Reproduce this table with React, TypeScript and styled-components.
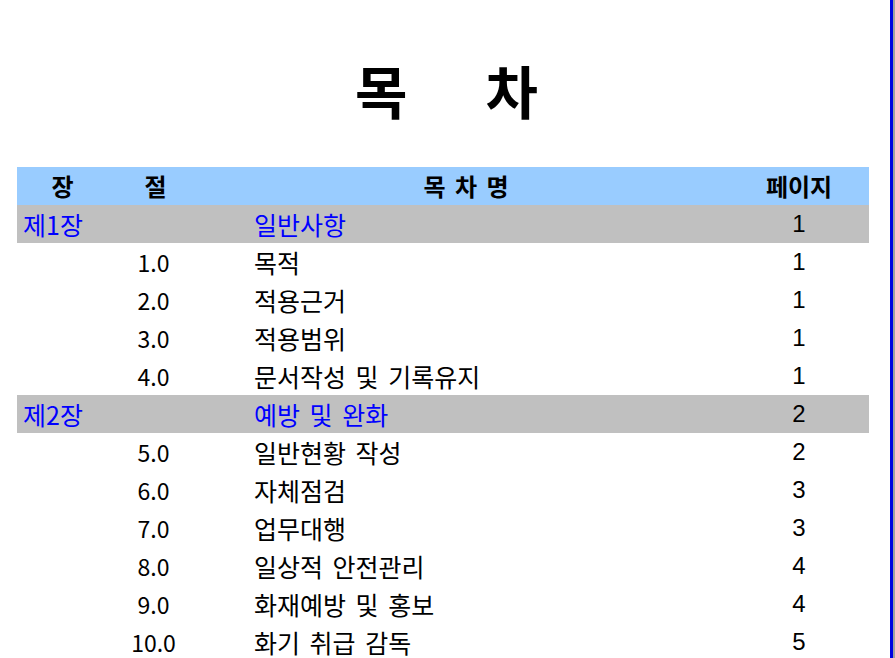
import React from "react";
import styled, { createGlobalStyle } from "styled-components";

const Global = createGlobalStyle`
  html, body {
    margin: 0;
    padding: 0;
    background: #a0a0a0;
  }
  body {
    font-family: "Noto Sans CJK KR", "Noto Sans", sans-serif;
  }
`;

const Page = styled.div`
  width: 890px;
  height: 658px;
  background: #ffffff;
  border-right: 3px solid #0000e0;
  box-sizing: content-box;
  overflow: hidden;
`;

const Inner = styled.div`
  padding: 0 26px 0 17px;
  display: flex;
  flex-direction: column;
`;

const Title = styled.h1`
  margin: 0;
  height: 167px;
  display: flex;
  align-items: center;
  justify-content: center;
  gap: 78px;
  font-size: 57px;
  font-weight: 700;
  color: #000;
  padding: 11px 0 0 12px;
  box-sizing: border-box;
`;

const Table = styled.table`
  width: 852px;
  border-collapse: collapse;
  table-layout: fixed;
`;

const HeadRow = styled.tr`
  background: #99ccff;
  height: 38px;
`;

const Th = styled.th<{ $w: number }>`
  width: ${(p) => p.$w}px;
  padding: 0;
  font-size: 24px;
  font-weight: 700;
  word-spacing: 4px;
  color: #000;
  text-align: center;
  vertical-align: middle;
  line-height: 38px;
`;

const Row = styled.tr<{ $chapter?: boolean }>`
  height: 38px;
  background: ${(p) => (p.$chapter ? "#c0c0c0" : "#ffffff")};
  color: ${(p) => (p.$chapter ? "#0000ff" : "#000000")};
`;

const ChapCell = styled.td`
  padding: 0 0 0 6px;
  font-size: 25px;
  line-height: 38px;
  text-align: left;
  white-space: nowrap;
`;

const SecCell = styled.td`
  padding: 0 4px 0 0;
  font-size: 23px;
  line-height: 38px;
  text-align: center;
`;

const NameCell = styled.td`
  padding: 0 0 0 51px;
  font-size: 25px;
  word-spacing: 4px;
  line-height: 38px;
  text-align: left;
  white-space: nowrap;
`;

const PageCell = styled.td`
  padding: 0;
  font-family: "Liberation Sans", Arial, sans-serif;
  font-size: 24px;
  line-height: 38px;
  text-align: center;
  color: #000;
`;

type Item = { chapter?: string; section?: string; name: string; page: number };

const items: Item[] = [
  { chapter: "제1장", name: "일반사항", page: 1 },
  { section: "1.0", name: "목적", page: 1 },
  { section: "2.0", name: "적용근거", page: 1 },
  { section: "3.0", name: "적용범위", page: 1 },
  { section: "4.0", name: "문서작성 및 기록유지", page: 1 },
  { chapter: "제2장", name: "예방 및 완화", page: 2 },
  { section: "5.0", name: "일반현황 작성", page: 2 },
  { section: "6.0", name: "자체점검", page: 3 },
  { section: "7.0", name: "업무대행", page: 3 },
  { section: "8.0", name: "일상적 안전관리", page: 4 },
  { section: "9.0", name: "화재예방 및 홍보", page: 4 },
  { section: "10.0", name: "화기 취급 감독", page: 5 },
];

export default function App() {
  return (
    <>
      <Global />
      <Page>
        <Inner>
          <Title>
            <span>목</span>
            <span>차</span>
          </Title>
          <Table>
            <thead>
              <HeadRow>
                <Th $w={91}>장</Th>
                <Th $w={95}>절</Th>
                <Th $w={526}>목 차 명</Th>
                <Th $w={140}>페이지</Th>
              </HeadRow>
            </thead>
            <tbody>
              {items.map((it, i) => (
                <Row key={i} $chapter={!!it.chapter}>
                  <ChapCell>{it.chapter ?? ""}</ChapCell>
                  <SecCell>{it.section ?? ""}</SecCell>
                  <NameCell>{it.name}</NameCell>
                  <PageCell>{it.page}</PageCell>
                </Row>
              ))}
            </tbody>
          </Table>
        </Inner>
      </Page>
    </>
  );
}
